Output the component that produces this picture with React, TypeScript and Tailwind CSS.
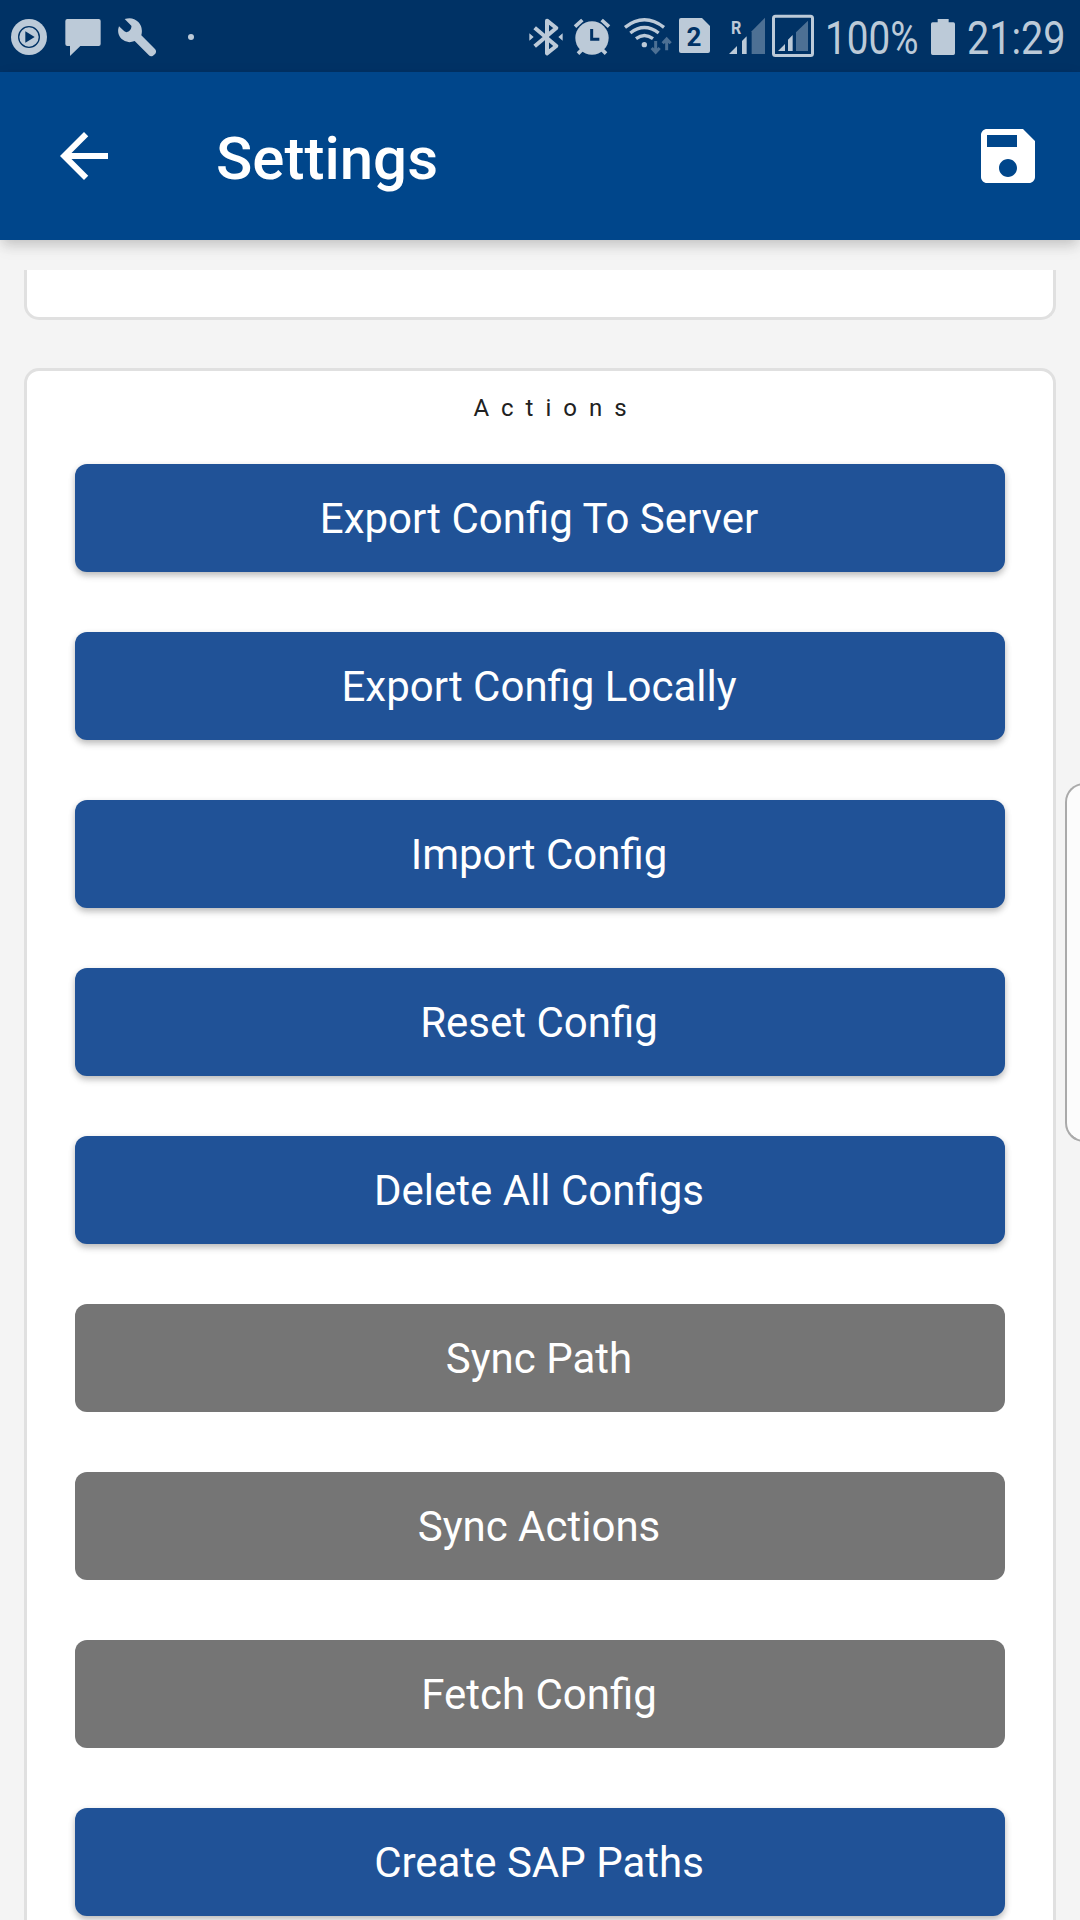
import type { ReactNode } from "react";

const TONE = "#bccad8";
const DIM = "#4d7094";

type GlyphProps = { className: string; viewBox: string; children: ReactNode };

// Status glyphs span the bar's full height; one pixel is three viewBox units.
function Glyph({ className, viewBox, children }: GlyphProps) {
  return (
    <svg className={`h-[72px] shrink-0 ${className}`} viewBox={viewBox} fill={TONE}>
      {children}
    </svg>
  );
}

function StatusBar() {
  return (
    <div className="flex h-[72px] shrink-0 items-center bg-[#003265] text-[#bccad8]">
      <Glyph className="ml-[10px] w-[38px]" viewBox="30 0 114 216">
        <circle cx="87" cy="111" r="54" />
        <circle cx="87" cy="111" r="31" fill="none" stroke="#003265" strokeWidth="4" />
        <path d="M76 94v34l28-17z" fill="#003265" />
      </Glyph>
      <Glyph className="ml-[16px] w-[38px]" viewBox="192 0 114 216">
        <path d="M202 57h94q6 0 6 6v69q0 6-6 6h-55l-31 30v-30h-8q-6 0-6-6V63q0-6 6-6z" />
      </Glyph>
      <Glyph className="ml-[15px] w-[41px]" viewBox="351 0 123 216">
        <path d="M374 57l20 20q2 10-7 17-8 5-14 0l-16-15q-8 22 8 38 17 15 39 6l42 42q6 6 13 2l7-6q5-7-1-14l-41-41q6-24-9-40-17-17-41-9z" />
      </Glyph>
      <Glyph className="ml-[29px] w-[8px]" viewBox="560 0 24 216">
        <circle cx="572" cy="111" r="9" />
      </Glyph>

      <Glyph className="ml-auto w-[36px]" viewBox="54 0 108 216">
        <path
          d="M74 83l65 55-28 22V62l28 22-65 55"
          fill="none"
          stroke={TONE}
          strokeWidth="12"
          strokeLinejoin="round"
        />
        <path d="M58 100l13 11-13 11zM158 100l-13 11 13 11z" />
      </Glyph>
      <Glyph className="ml-[9px] w-[38px]" viewBox="189 0 114 216">
        <circle cx="246" cy="114" r="50" />
        <path
          d="M195 80l22-20M275 60l22 20M216 149l-12 12M276 149l12 12"
          stroke={TONE}
          strokeWidth="11"
        />
        <path d="M245 87v31h23" fill="none" stroke="#003265" strokeWidth="9" />
      </Glyph>
      <Glyph className="ml-[12px] w-[50px]" viewBox="339 0 150 216">
        <g fill="none" stroke={TONE} strokeWidth="10">
          <path d="M345 82q58-45 117 0" />
          <path d="M361 99q42-33 85 0" />
          <path d="M378 116q25-19 51 0" />
        </g>
        <circle cx="403" cy="134" r="8" />
        <path
          d="M437 123v34M425 144l12 13 12-13M470 151v-33M458 130l12-13 12 13"
          fill="none"
          stroke={DIM}
          strokeWidth="9"
        />
      </Glyph>
      <Glyph className="ml-[6px] w-[31px]" viewBox="507 0 93 216">
        <path d="M513 54h63l24 24v75q0 6-6 6h-81q-6 0-6-6V60q0-6 6-6z" />
        <text
          x="552"
          y="138"
          textAnchor="middle"
          fill="#003265"
          fontFamily="Roboto"
          fontWeight="700"
          fontSize="78"
        >
          2
        </text>
      </Glyph>
      <Glyph className="ml-[19px] w-[37px]" viewBox="657 0 111 216">
        <text
          x="663"
          y="101"
          fontFamily="Roboto"
          fontWeight="700"
          fontSize="54"
          textLength="31"
          lengthAdjust="spacingAndGlyphs"
        >
          R
        </text>
        <path d="M657 162l24-24v24zM696 162v-39l14-14v53z" />
        <path d="M725 162V94l40-41v109z" fill={DIM} />
      </Glyph>
      <Glyph className="ml-[6px] w-[42px]" viewBox="786 0 126 216">
        <rect x="790.5" y="48.5" width="117" height="118" rx="6" fill="none" stroke={TONE} strokeWidth="9" />
        <path d="M804 153l21-21v21zM834 153v-34l14-14v48z" />
        <path d="M858 153V97l36-35v91z" fill={DIM} />
      </Glyph>
      <div className="ml-[11px] flex h-[72px] w-[94px] items-center">
        <span className="mt-1 origin-left scale-x-[0.84] font-[Roboto] text-[46px] leading-[54px]">100%</span>
      </div>
      <Glyph className="ml-[12px] w-[24px]" viewBox="393 0 72 216">
        <path d="M413 57h33v10h14q5 0 5 5v88q0 5-5 5h-62q-5 0-5-5V72q0-5 5-5h15z" />
      </Glyph>
      <div className="ml-[12px] mr-[14px] flex h-[72px] w-[99px] items-center">
        <span className="mt-1 origin-left scale-x-[0.86] font-[Roboto] text-[46px] leading-[54px]">21:29</span>
      </div>
    </div>
  );
}

function AppBar() {
  return (
    <header className="relative z-10 flex h-[168px] shrink-0 items-center bg-[#00468b] text-white shadow-[0_6px_12px_-3px_rgba(0,0,0,0.15),0_9px_15px_0_rgba(0,0,0,0.05),0_3px_18px_0_rgba(0,0,0,0.04)]">
      <button aria-label="Back" className="ml-12 size-[72px]">
        <svg viewBox="0 0 24 24" fill="currentColor">
          <path d="M20 11H7.83l5.59-5.59L12 4l-8 8 8 8 1.41-1.41L7.83 13H20v-2z" />
        </svg>
      </button>
      <h1 className="mt-1.5 ml-24 text-[60px] leading-[70px] font-medium">Settings</h1>
      <button aria-label="Save" className="mr-9 ml-auto size-[72px]">
        <svg viewBox="0 0 24 24" fill="currentColor">
          <path d="M17 3H5c-1.11 0-2 .9-2 2v14c0 1.1.89 2 2 2h14c1.1 0 2-.9 2-2V7l-4-4zm-5 16c-1.66 0-3-1.34-3-3s1.34-3 3-3 3 1.34 3 3-1.34 3-3 3zm3-10H5V5h10v4z" />
        </svg>
      </button>
    </header>
  );
}

const actions = [
  { label: "Export Config To Server", enabled: true },
  { label: "Export Config Locally", enabled: true },
  { label: "Import Config", enabled: true },
  { label: "Reset Config", enabled: true },
  { label: "Delete All Configs", enabled: true },
  { label: "Sync Path", enabled: false },
  { label: "Sync Actions", enabled: false },
  { label: "Fetch Config", enabled: false },
  { label: "Create SAP Paths", enabled: true },
];

export default function App() {
  return (
    <div className="relative flex h-[1920px] w-[1080px] flex-col overflow-hidden bg-[#f4f4f4] font-[Roboto,sans-serif]">
      <StatusBar />
      <AppBar />
      <main className="mt-[30px] flex min-h-0 flex-1 flex-col gap-12 overflow-hidden px-6">
        <section className="h-[50px] shrink-0 rounded-b-[15px] border-x-[3px] border-b-[3px] border-[#e0e0e0] bg-white" />
        <section className="h-[1800px] shrink-0 rounded-[15px] border-[3px] border-[#e0e0e0] bg-white px-12">
          <h2 className="mt-[23px] pl-[32px] text-center text-[24px] leading-7 tracking-[12px] text-[#212121]">
            Actions
          </h2>
          <div className="mt-[42px] flex flex-col gap-[60px]">
            {actions.map(({ label, enabled }) => (
              <button
                key={label}
                disabled={!enabled}
                className={`h-[108px] rounded-xl pr-0.5 text-[42px] leading-[49px] text-white ${
                  enabled
                    ? "bg-[#205297] shadow-[0_3px_6px_0_rgba(0,0,0,0.22),0_4px_9px_0_rgba(0,0,0,0.08)]"
                    : "bg-[#757575]"
                }`}
              >
                {label}
              </button>
            ))}
          </div>
        </section>
      </main>
      <div className="absolute top-[783px] -right-1 h-[359px] w-[19px] rounded-l-[20px] border-2 border-[#aaaaaa] bg-[#fcfcfc]" />
    </div>
  );
}
